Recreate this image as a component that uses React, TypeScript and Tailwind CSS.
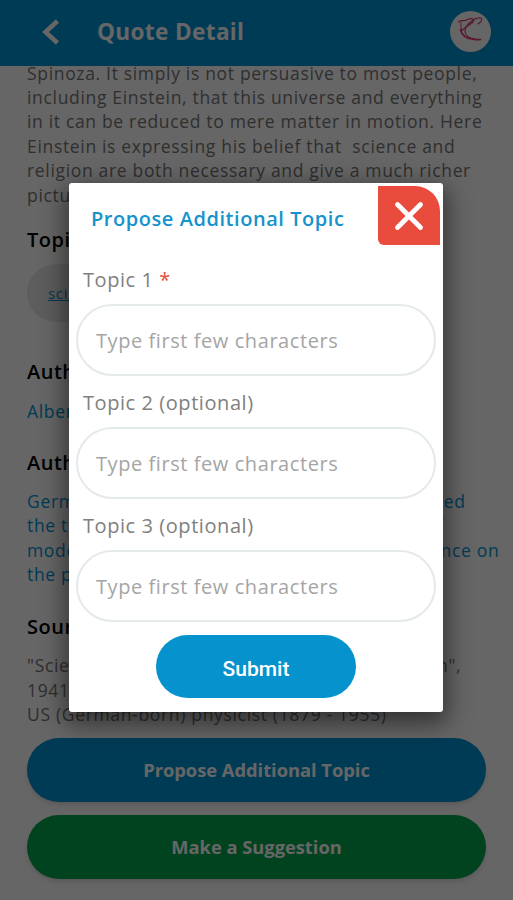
import { X } from "lucide-react";

const topics = ["Topic 1", "Topic 2 (optional)", "Topic 3 (optional)"];

function Header() {
  return (
    <header className="relative z-10 flex h-[66px] shrink-0 items-center bg-[#0095d6] pb-[3px]">
      <svg viewBox="0 0 18 26" className="ml-[42px] h-[26px] w-[18px]" fill="none" stroke="#fff" strokeWidth="4.6">
        <path d="M15.5 2 3.5 13l12 11" />
      </svg>
      <h1 className="ml-[37px] text-[22.6px] font-bold tracking-[0.35px] text-white">Quote Detail</h1>
      <div className="ml-auto mr-[22px] flex size-[41px] items-center justify-center rounded-full bg-white">
        <svg viewBox="0 0 41 41" className="size-[41px]" fill="none" stroke="#e03a6c" strokeLinecap="round">
          <path d="M8.5 11c2-3 5 0 8-2 3-2 8-2 7 1-1 3-9 6-12 10" strokeWidth="1.2" />
          <path d="M11 11c-1 3 1 6 0 9" strokeWidth="1" />
          <path d="M28 13c5-3 5-7 0-6-6 1-13 8-13 13 0 4 4 7 10 8" strokeWidth="1.1" />
          <path d="M10.5 18.500c1 5 6 9.500 11 9.500 3 0 5 1 9 .5" strokeWidth="1.7" />
        </svg>
      </div>
    </header>
  );
}

function Details() {
  return (
    <main className="flex-1 whitespace-pre px-[27px] text-[17.5px] leading-[24.4px] tracking-[0.67px] text-[#777]">
      <p className="-mt-[5.5px]">
        {`Spinoza. It simply is not persuasive to most people,
including Einstein, that this universe and everything
in it can be reduced to mere matter in motion. Here
Einstein is expressing his belief that  science and
religion are both necessary and give a much richer
picture of reality.`}
      </p>
      <h2 className="mt-[21px] text-[20px] font-semibold tracking-[0.5px] text-black">Topics</h2>
      <div className="mt-[12px] flex h-[58px] w-[150px] items-center rounded-full bg-[#e8e8e8] px-[21px] pb-px text-[15px] text-[#0095d6] underline">
        science
      </div>
      <h2 className="mt-[38px] text-[20px] font-semibold tracking-[0.5px] text-black">Author</h2>
      <p className="mt-[14px] text-[#0095d6]">Albert Einstein</p>
      <h2 className="mt-[27.500px] text-[20px] font-semibold tracking-[0.5px] text-black">Author Bio</h2>
      <p className="mt-[14px] text-[#0095d6]">
        {`German-born theoretical physicist who developed
the theory of relativity, one of the two pillars of
modern physics. He is known also for his influence on
the philosophy of science.`}
      </p>
      <h2 className="mt-[28px] text-[20px] font-semibold tracking-[0.5px] text-black">Source</h2>
      <p className="mt-[14px]">
        {`"Science, Philosophy and Religion, a Symposium",
1941
US (German-born) physicist (1879 - 1955)`}
      </p>
    </main>
  );
}

function Dialog() {
  return (
    <div className="absolute left-[69px] top-[183px] z-30 flex h-[529px] w-[374px] flex-col rounded-[3px] bg-white shadow-[0_8px_24px_4px_rgba(0,0,0,0.5)]">
      <div className="flex h-[66px] items-start justify-between pl-[22px] pr-[3px] pt-[3px]">
        <h2 className="mt-[18px] text-[20px] font-semibold leading-[30px] tracking-[0.55px] text-[#1593cc]">
          Propose Additional Topic
        </h2>
        <button className="flex h-[59px] w-[62px] items-center justify-center rounded-bl-[6px] rounded-tr-[25px] bg-[#e94b3c]">
          <X className="size-[46px] text-white" strokeWidth={2.5} />
        </button>
      </div>
      <div className="px-[7px] pt-[12px]">
        {topics.map((topic, i) => (
          <label key={topic} className="block h-[123px] text-[20px] tracking-[0.57px] text-[#808080]">
            <span className="block h-[43px] pl-[7px] leading-[38px]">
              {topic}
              {i === 0 && <span className="text-[#e94b3c]"> *</span>}
            </span>
            <input
              placeholder="Type first few characters"
              className="block h-[72px] w-[360px] rounded-full border-2 border-[#e4e9e9] px-[18px] pt-px placeholder:text-[#a5a5a5]"
            />
          </label>
        ))}
      </div>
      <button className="mx-auto mt-[5px] h-[63px] w-[200px] rounded-full bg-[#0592cd] pt-[6px] font-['Roboto'] text-[21px] font-medium text-white">
        Submit
      </button>
    </div>
  );
}

export default function App() {
  return (
    <div className="relative flex h-[900px] w-[513px] flex-col overflow-hidden bg-white font-['Open_Sans',sans-serif]">
      <Header />
      <Details />
      <footer className="flex flex-col gap-[13px] px-[27px] pb-[21px] text-[18.3px] font-bold text-white">
        <button className="h-[64px] rounded-full bg-[#0095d6] shadow-md">Propose Additional Topic</button>
        <button className="h-[64px] rounded-full bg-[#00a84c] shadow-md">Make a Suggestion</button>
      </footer>
      <div className="absolute inset-0 z-20 bg-black/60" />
      <Dialog />
    </div>
  );
}
